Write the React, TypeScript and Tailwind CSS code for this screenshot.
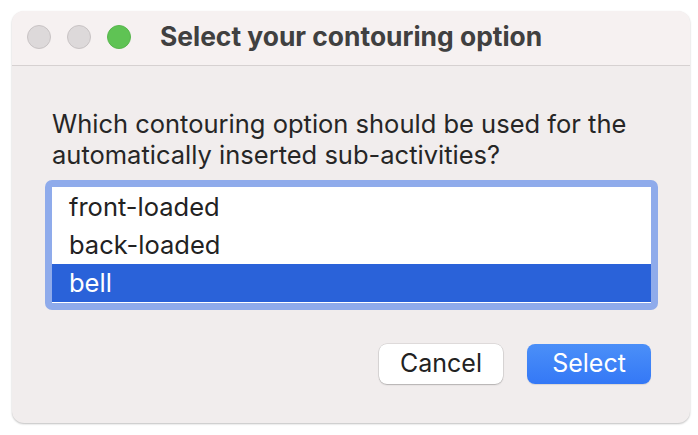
const options = ['front-loaded', 'back-loaded', 'bell'];

function Light({ color, border }: { color: string; border: string }) {
  return <span className={`block w-[24px] h-[24px] rounded-full border ${color} ${border}`} />;
}

export default function App() {
  const selected = 'bell';
  return (
    <div className="w-[698px] h-[435px] bg-white pt-[11px] pl-[12px]" style={{ fontFamily: 'Inter, "Liberation Sans", sans-serif' }}>
      <div className="w-[678px] h-[412px] rounded-[12px] bg-[#f1eded] overflow-hidden shadow-[0_1px_2px_rgba(0,0,0,0.25)] flex flex-col">
        <div className="h-[55px] bg-[#f6f1f1] border-b border-[#d6d1d1] flex items-center pl-[15px] pb-[2px]">
          <div className="flex gap-[16px]">
            <Light color="bg-[#ddd9da]" border="border-[#c8c3c4]" />
            <Light color="bg-[#ddd9da]" border="border-[#c8c3c4]" />
            <Light color="bg-[#5fc354]" border="border-[#58b64d]" />
          </div>
          <h1 className="ml-[29px] text-[26.4px] font-bold text-[#404040]">Select your contouring option</h1>
        </div>
        <div className="flex-1 pl-[40px] pr-[39px] pt-[42px]">
          <p className="text-[25.5px] leading-[31px] text-[#262626]">
            Which contouring option should be used for the automatically inserted sub-activities?
          </p>
          <div className="mt-[10px] -mx-[7px] rounded-[7px] bg-[#8fabeb] p-[7px]">
            <div className="bg-white pt-[1px] pb-[1px]">
              {options.map((o) => (
                <div
                  key={o}
                  className={`h-[38px] flex items-center pl-[17px] text-[25.5px] ${o === selected ? 'bg-[#2a62d9] text-white' : 'text-[#222222]'}`}
                >
                  {o}
                </div>
              ))}
            </div>
          </div>
          <div className="mt-[34px] flex justify-end gap-[24px]">
            <button className="w-[124px] h-[40px] rounded-[8px] bg-white text-[25px] text-[#222222] shadow-[0_0_0_0.5px_rgba(0,0,0,0.15),0_1px_1.5px_rgba(0,0,0,0.2)]">Cancel</button>
            <button className="w-[124px] h-[40px] rounded-[8px] bg-gradient-to-b from-[#4b8ff8] to-[#3478f6] text-[25px] text-white shadow-[0_1px_1px_rgba(0,0,0,0.1)]">Select</button>
          </div>
        </div>
      </div>
    </div>
  );
}
